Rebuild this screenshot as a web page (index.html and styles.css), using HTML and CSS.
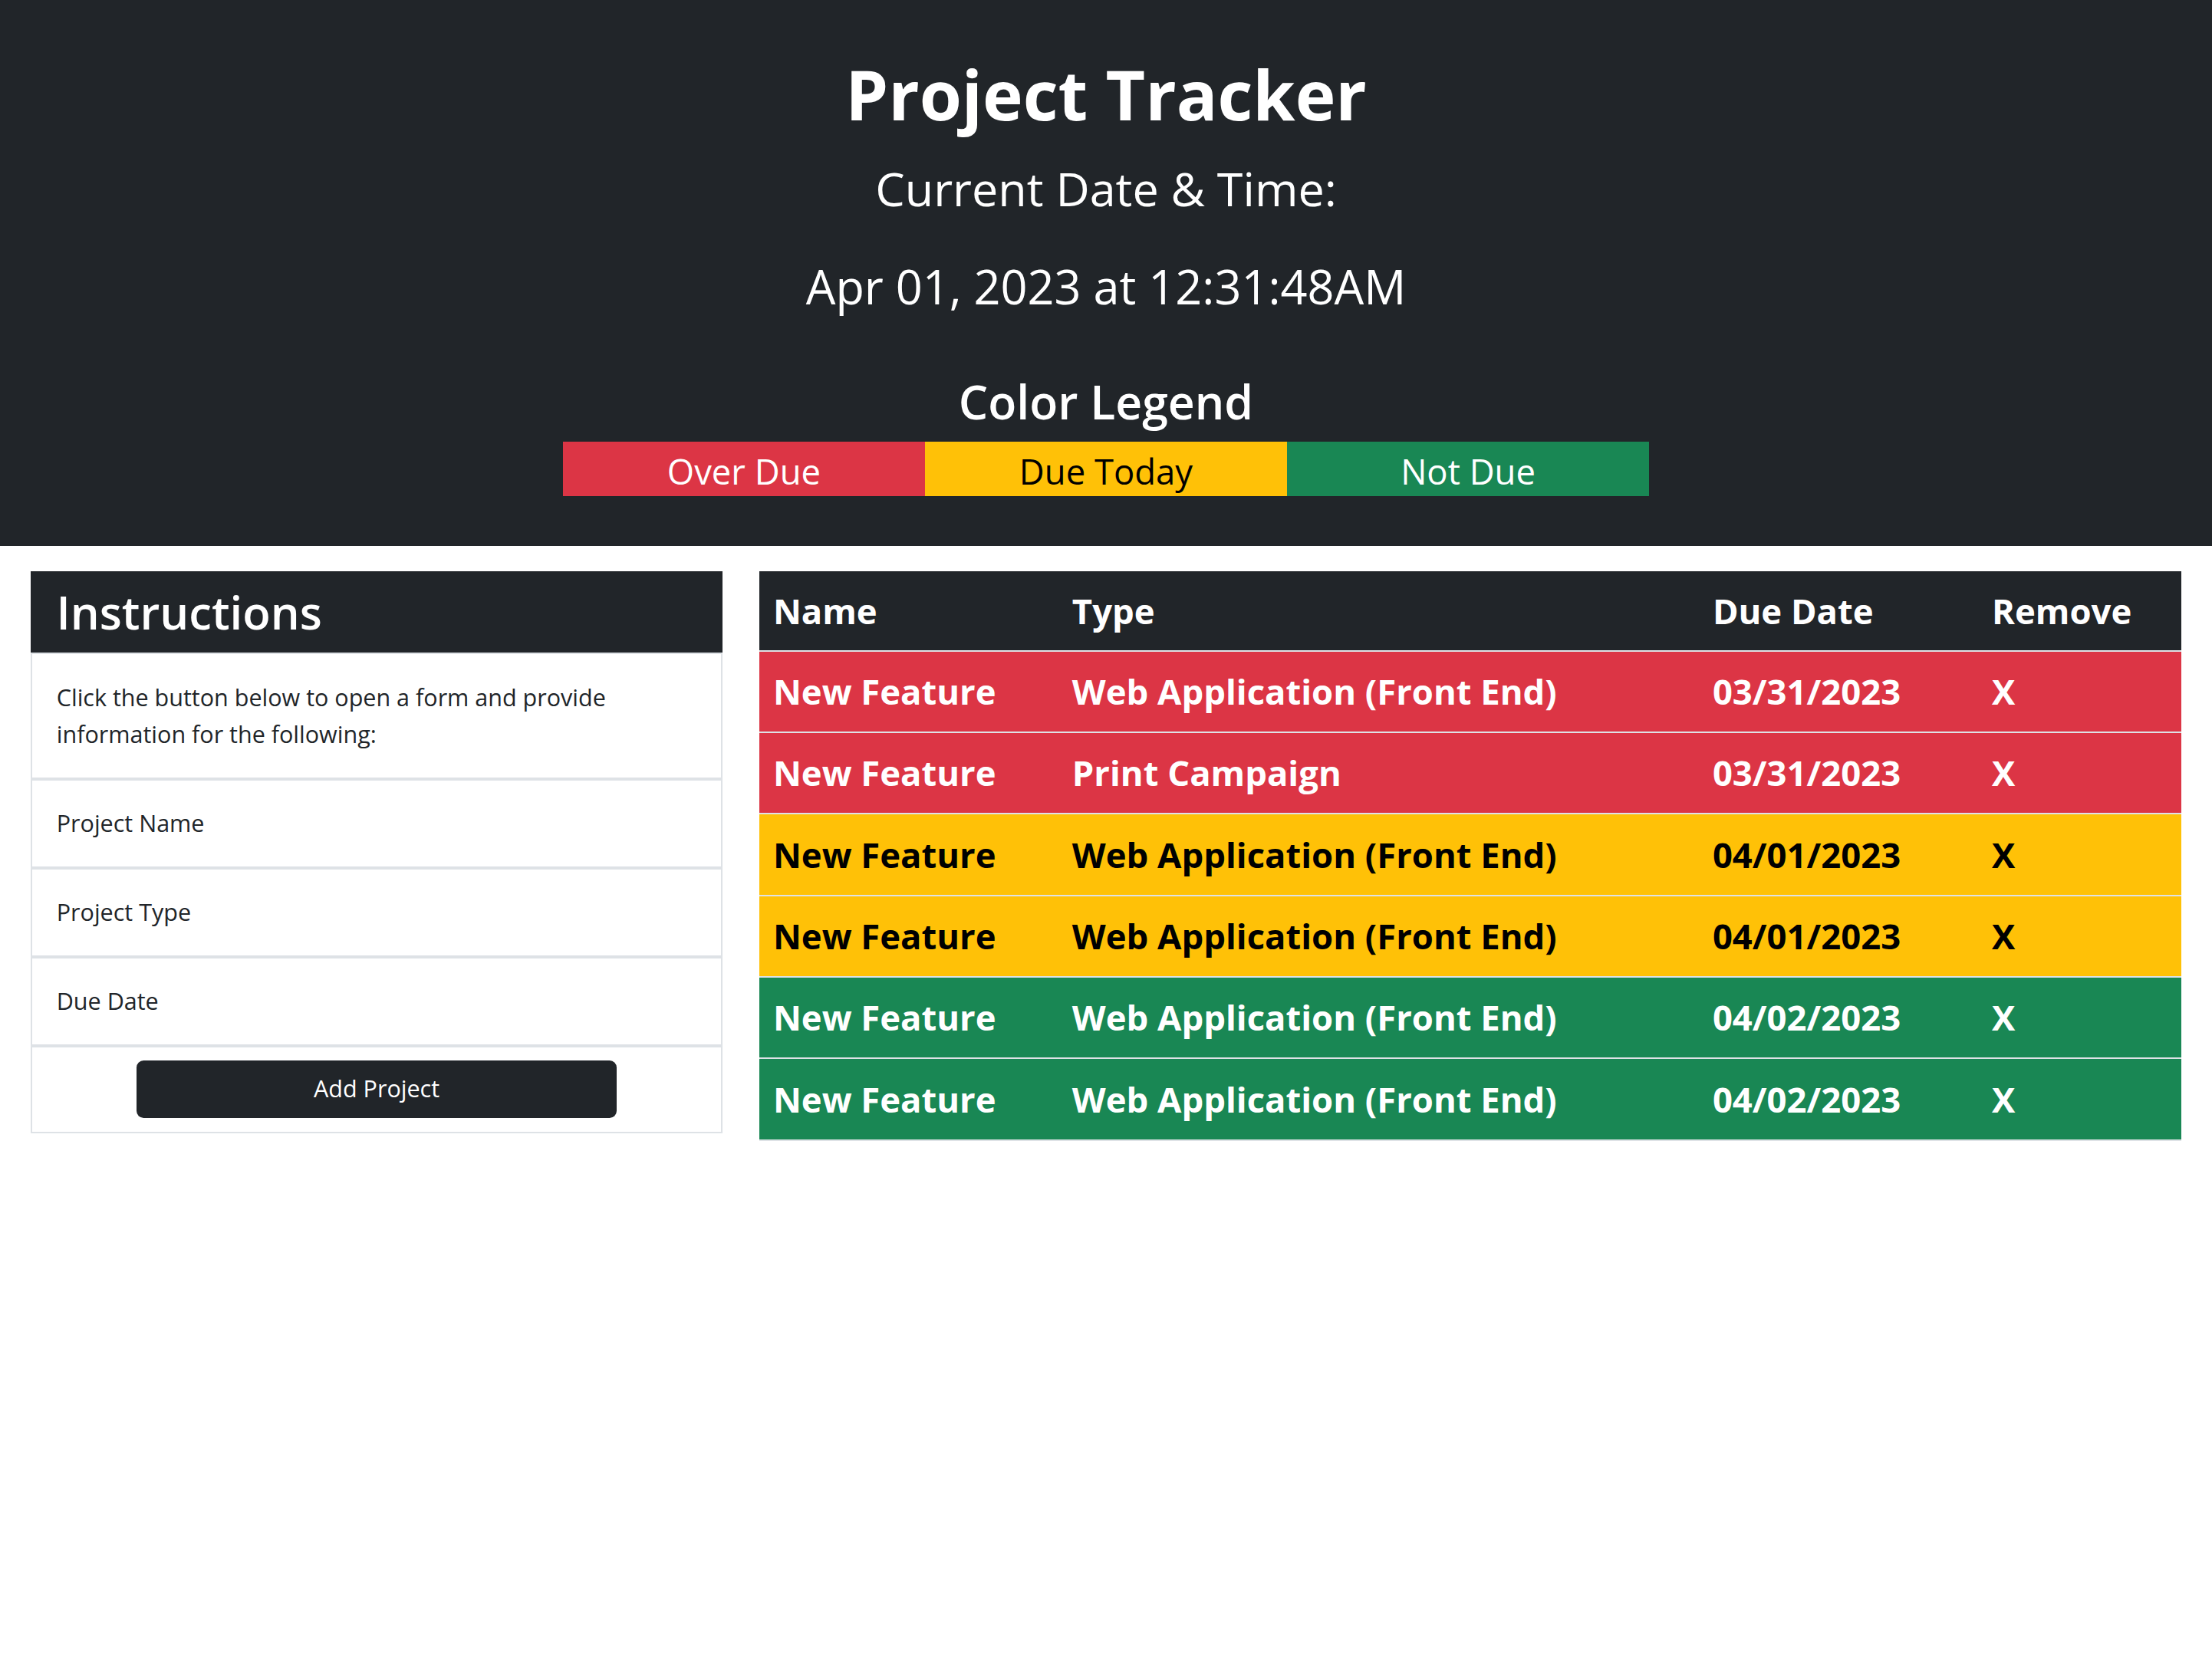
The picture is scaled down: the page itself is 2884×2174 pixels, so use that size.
FILE: index.html
```html
<!DOCTYPE html>
<html lang="en">
<head>
<meta charset="utf-8">
<title>Project Tracker</title>
<link rel="stylesheet" href="styles.css">
</head>
<body>
<header class="hero">
  <h1 class="hero-title">Project Tracker</h1>
  <p class="hero-sub">Current Date &amp; Time:</p>
  <p class="hero-date">Apr 01, 2023 at 12:31:48AM</p>
  <h2 class="legend-title">Color Legend</h2>
  <div class="legend">
    <div class="legend-item is-over">Over Due</div>
    <div class="legend-item is-today">Due Today</div>
    <div class="legend-item is-future">Not Due</div>
  </div>
</header>
<main class="content">
  <section class="card">
    <h3 class="card-header">Instructions</h3>
    <ul class="card-list">
      <li class="card-item">Click the button below to open a form and provide information for the following:</li>
      <li class="card-item">Project Name</li>
      <li class="card-item">Project Type</li>
      <li class="card-item">Due Date</li>
      <li class="card-item card-item-btn"><button class="btn-add" type="button">Add Project</button></li>
    </ul>
  </section>
  <table class="projects">
    <colgroup>
      <col class="col-name"><col class="col-type"><col class="col-date"><col class="col-remove">
    </colgroup>
    <thead>
      <tr><th>Name</th><th>Type</th><th>Due Date</th><th>Remove</th></tr>
    </thead>
    <tbody>
      <tr class="row-over"><td>New Feature</td><td>Web Application (Front End)</td><td>03/31/2023</td><td>X</td></tr>
      <tr class="row-over"><td>New Feature</td><td>Print Campaign</td><td>03/31/2023</td><td>X</td></tr>
      <tr class="row-today"><td>New Feature</td><td>Web Application (Front End)</td><td>04/01/2023</td><td>X</td></tr>
      <tr class="row-today"><td>New Feature</td><td>Web Application (Front End)</td><td>04/01/2023</td><td>X</td></tr>
      <tr class="row-future"><td>New Feature</td><td>Web Application (Front End)</td><td>04/02/2023</td><td>X</td></tr>
      <tr class="row-future"><td>New Feature</td><td>Web Application (Front End)</td><td>04/02/2023</td><td>X</td></tr>
    </tbody>
  </table>
</main>
</body>
</html>
```

FILE: styles.css
```css
html {
  zoom: 1.8393;
}

*,
*::before,
*::after {
  box-sizing: border-box;
}

body {
  margin: 0;
  font-family: "Open Sans", "Noto Sans", sans-serif;
  color: #212529;
  background: #ffffff;
}

.hero {
  background: #212529;
  color: #ffffff;
  padding: 33px 0 35px;
  display: flex;
  flex-direction: column;
  align-items: center;
  text-align: center;
}

.hero-title {
  margin: 0;
  font-size: 48.5px;
  font-weight: 700;
  line-height: 67px;
}

.hero-sub {
  margin: 8px 0 0;
  font-size: 33.2px;
  font-weight: 400;
  line-height: 51px;
}

.hero-date {
  margin: 19px 0 0;
  font-size: 33.3px;
  font-weight: 400;
  line-height: 51px;
}

.legend-title {
  margin: 37px 0 0;
  font-size: 33px;
  font-weight: 600;
  line-height: 38px;
}

.legend {
  margin-top: 9px;
  width: 770px;
  display: flex;
}

.legend-item {
  flex: 1;
  font-size: 24.7px;
  line-height: 39px;
  height: 39px;
  padding-top: 2px;
}

.is-over { background: #dc3545; color: #ffffff; }
.is-today { background: #ffc107; color: #000000; }
.is-future { background: #198754; color: #ffffff; }

.content {
  display: flex;
  align-items: flex-start;
  gap: 26px;
  padding: 18px 22px;
}

.card {
  width: 490px;
  flex: none;
  border: 1.1px solid #dee2e6;
  border-top: none;
}

.card-header {
  margin: 0 -1.1px;
  background: #212529;
  color: #ffffff;
  font-size: 32.5px;
  font-weight: 600;
  line-height: 43px;
  padding: 7.5px 18px;
}

.card-list {
  list-style: none;
  margin: 0;
  padding: 0;
}

.card-item {
  border-top: 1.1px solid #dee2e6;
  border-bottom: 1.1px solid #dee2e6;
  padding: 17.5px 17px;
  font-size: 16.6px;
  line-height: 26px;
}

.card-item:last-child {
  border-bottom: none;
}

.card-item-btn {
  padding: 9px 17px 10px;
  display: flex;
  justify-content: center;
}

.btn-add {
  width: 340px;
  height: 41px;
  border: none;
  border-radius: 5px;
  background: #212529;
  color: #ffffff;
  font-family: inherit;
  font-size: 16.6px;
  line-height: 26px;
}

.projects {
  flex: 1;
  border-collapse: collapse;
  table-layout: fixed;
  font-weight: 700;
  font-size: 24.7px;
  line-height: 36.7px;
}

.col-name { width: 212px; }
.col-type { width: 454px; }
.col-date { width: 198px; }
.col-remove { width: 144px; }

.projects th,
.projects td {
  text-align: left;
  padding: 10px;
  white-space: nowrap;
  border-bottom: 1.1px solid #dee2e6;
}

.projects thead tr {
  background: #212529;
  color: #ffffff;
}

.projects th {
  padding: 10px 10px 9.3px;
}

.row-over { background: #dc3545; color: #ffffff; }
.row-today { background: #ffc107; color: #000000; }
.row-future { background: #198754; color: #ffffff; }
```
